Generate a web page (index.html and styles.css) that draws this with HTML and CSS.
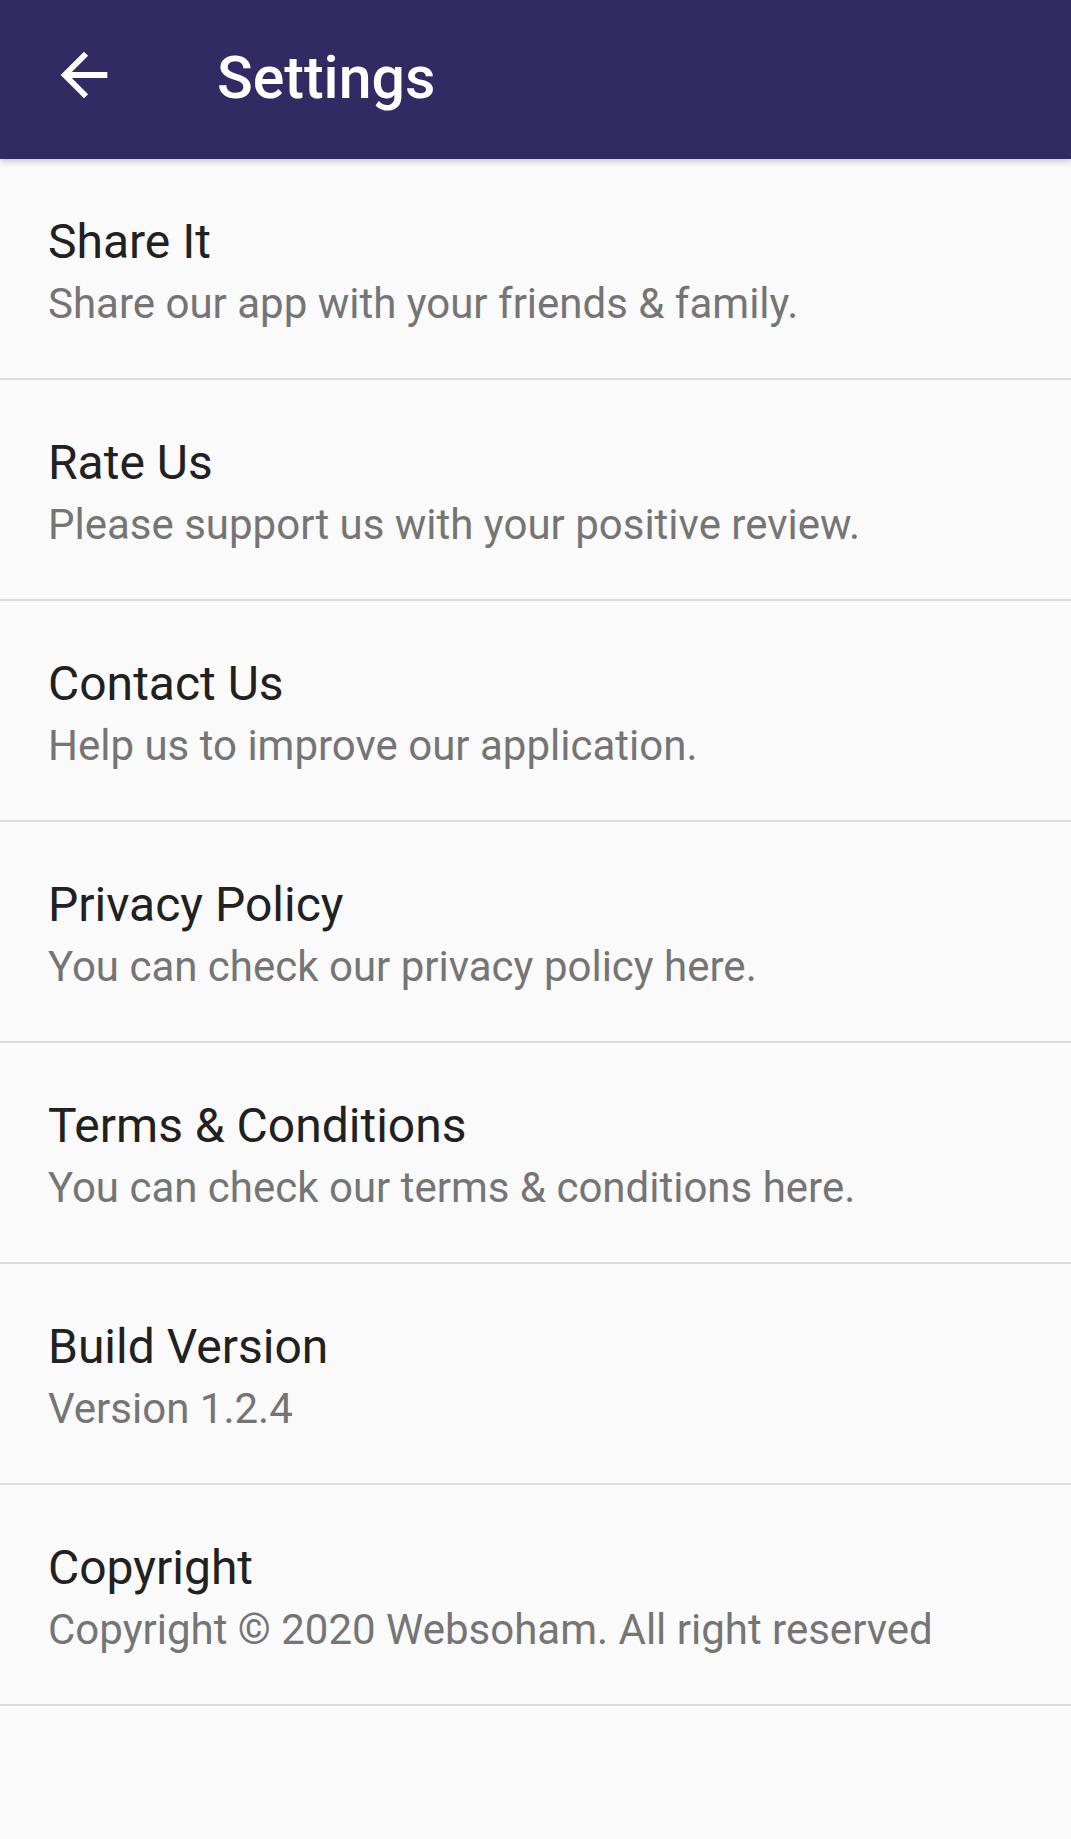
FILE: index.html
```html
<!DOCTYPE html>
<html lang="en">
<head>
    <meta charset="UTF-8">
    <meta name="viewport" content="width=device-width, initial-scale=1.0">
    <title>Settings</title>
    <link rel="stylesheet" href="styles.css">
</head>
<body>
    <div class="toolbar">
        <button class="back" title="Back">
            <svg width="70" height="70" viewBox="0 0 24 24">
                <path d="M20 11H7.83l5.59-5.59L12 4l-8 8 8 8 1.41-1.41L7.83 13H20v-2z" fill="#fff"/>
            </svg>
        </button>
        <h1>Settings</h1>
    </div>
    <div class="list">
        <div class="item">
            <div class="title">Share It</div>
            <div class="sub">Share our app with your friends &amp; family.</div>
        </div>
        <div class="item">
            <div class="title">Rate Us</div>
            <div class="sub">Please support us with your positive review.</div>
        </div>
        <div class="item">
            <div class="title">Contact Us</div>
            <div class="sub">Help us to improve our application.</div>
        </div>
        <div class="item">
            <div class="title">Privacy Policy</div>
            <div class="sub">You can check our privacy policy here.</div>
        </div>
        <div class="item">
            <div class="title">Terms &amp; Conditions</div>
            <div class="sub">You can check our terms &amp; conditions here.</div>
        </div>
        <div class="item">
            <div class="title">Build Version</div>
            <div class="sub">Version 1.2.4</div>
        </div>
        <div class="item">
            <div class="title">Copyright</div>
            <div class="sub">Copyright &copy; 2020 Websoham. All right reserved</div>
        </div>
    </div>
</body>
</html>
```

FILE: styles.css
```css
body{
    margin: 0;
    padding: 0;
    background-color: #fafafa;
    font-family: Roboto, "Noto Sans", sans-serif;
    min-height: 1839px;
}

.toolbar{
    height: 159px;
    background-color: #312b63;
    display: flex;
    align-items: center;
    box-shadow: 0 3px 6px rgba(0, 0, 0, 0.18);
    position: relative;
}
.toolbar .back{
    background: none;
    border: none;
    padding: 0;
    margin-left: 49px;
    margin-top: -9px;
    width: 70px;
    height: 70px;
    display: flex;
}
.toolbar h1{
    margin: -4px 0 0 98px;
    color: #fff;
    font-size: 59px;
    font-weight: 500;
}

.item{
    height: 209px;
    padding-top: 10px;
    border-bottom: 2px solid #dcdcdc;
    padding-left: 48px;
    display: flex;
    flex-direction: column;
    justify-content: center;
}
.item .title{
    font-size: 48px;
    color: #212121;
    line-height: 60px;
}
.item .sub{
    font-size: 42px;
    color: #757575;
    line-height: 64px;
}
```
